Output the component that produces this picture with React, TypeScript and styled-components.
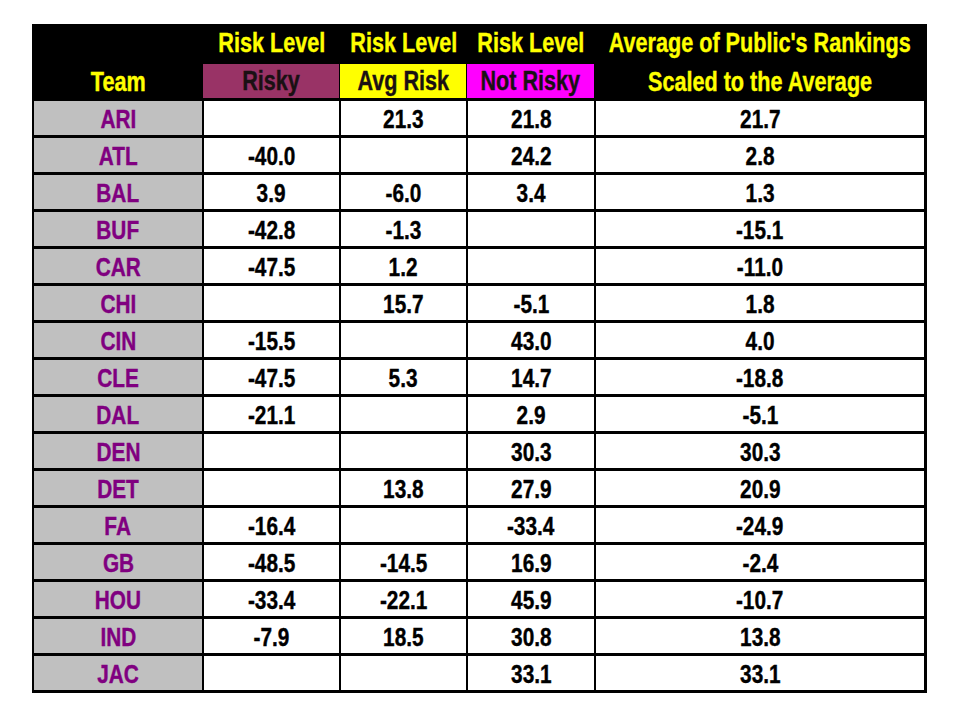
import styled, { createGlobalStyle } from "styled-components";

const GlobalStyle = createGlobalStyle`
  html, body {
    margin: 0;
    padding: 0;
    background: #ffffff;
  }
`;

const Page = styled.div`
  padding: 24px 0 0 32px;
`;

const Sheet = styled.div`
  display: grid;
  grid-template-columns: 168px 135px 125px 126px 328px;
  grid-template-rows: 37px 34px repeat(16, 34px);
  column-gap: 2px;
  row-gap: 3px;
  width: 895px;
  box-sizing: border-box;
  padding: 0 3px 3px 2px;
  background: #000000;
  font-family: "Liberation Sans", Arial, sans-serif;
  font-weight: bold;
  font-size: 26px;
`;

const Cell = styled.div`
  display: flex;
  align-items: center;
  justify-content: center;
  white-space: nowrap;
  line-height: 1;
  padding-top: 2px;
  box-sizing: border-box;
  min-width: 0;
`;

/* no narrow face installed, so squeeze the bold face sideways */
const Narrow = styled.span`
  display: inline-block;
  flex-shrink: 0;
  transform: scaleX(0.8);
  -webkit-text-stroke: 0.4px currentColor;
`;

const HeadCell = styled(Cell)<{ $fill?: string }>`
  color: ${(p) => (p.$fill ? "#1a1013" : "#ffff00")};
  background: ${(p) => p.$fill ?? "transparent"};
  font-size: 27px;
  margin-left: ${(p) => (p.$fill ? "-1px" : "0")};
  padding-top: ${(p) => (p.$fill ? "0" : "2px")};
`;

const TeamCell = styled(Cell)`
  background: #c0c0c0;
  color: #800080;
`;

const ValueCell = styled(Cell)`
  background: #ffffff;
  color: #000000;
`;

type Row = [string, string, string, string, string];

const rows: Row[] = [
  ["ARI", "", "21.3", "21.8", "21.7"],
  ["ATL", "-40.0", "", "24.2", "2.8"],
  ["BAL", "3.9", "-6.0", "3.4", "1.3"],
  ["BUF", "-42.8", "-1.3", "", "-15.1"],
  ["CAR", "-47.5", "1.2", "", "-11.0"],
  ["CHI", "", "15.7", "-5.1", "1.8"],
  ["CIN", "-15.5", "", "43.0", "4.0"],
  ["CLE", "-47.5", "5.3", "14.7", "-18.8"],
  ["DAL", "-21.1", "", "2.9", "-5.1"],
  ["DEN", "", "", "30.3", "30.3"],
  ["DET", "", "13.8", "27.9", "20.9"],
  ["FA", "-16.4", "", "-33.4", "-24.9"],
  ["GB", "-48.5", "-14.5", "16.9", "-2.4"],
  ["HOU", "-33.4", "-22.1", "45.9", "-10.7"],
  ["IND", "-7.9", "18.5", "30.8", "13.8"],
  ["JAC", "", "", "33.1", "33.1"],
];

export default function App() {
  return (
    <>
      <GlobalStyle />
      <Page>
        <Sheet>
          <HeadCell />
          <HeadCell><Narrow>Risk Level</Narrow></HeadCell>
          <HeadCell><Narrow>Risk Level</Narrow></HeadCell>
          <HeadCell><Narrow>Risk Level</Narrow></HeadCell>
          <HeadCell><Narrow>Average of Public's Rankings</Narrow></HeadCell>

          <HeadCell><Narrow>Team</Narrow></HeadCell>
          <HeadCell $fill="#993366"><Narrow>Risky</Narrow></HeadCell>
          <HeadCell $fill="#ffff00"><Narrow>Avg Risk</Narrow></HeadCell>
          <HeadCell $fill="#ff00ff"><Narrow>Not Risky</Narrow></HeadCell>
          <HeadCell><Narrow>Scaled to the Average</Narrow></HeadCell>

          {rows.map((r) => [
            <TeamCell key={r[0]}>
              <Narrow>{r[0]}</Narrow>
            </TeamCell>,
            ...r.slice(1).map((v, i) => (
              <ValueCell key={r[0] + i}>
                <Narrow>{v}</Narrow>
              </ValueCell>
            )),
          ])}
        </Sheet>
      </Page>
    </>
  );
}
